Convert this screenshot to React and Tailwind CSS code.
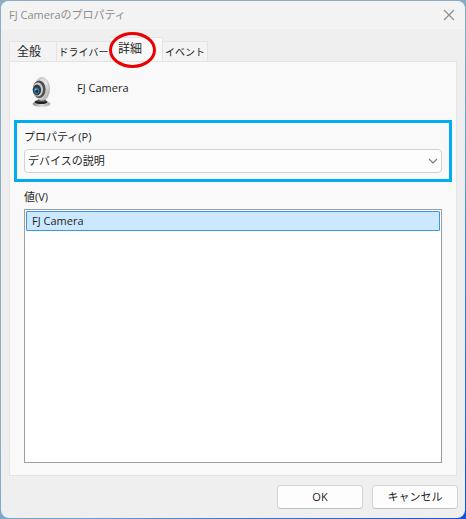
import React, { useState } from 'react';

const tabs = [
  { id: 'general', label: '全般', className: 'w-12 pl-[7px] text-xs' },
  { id: 'driver', label: 'ドライバー', className: 'w-[54px] justify-center text-[10px]' },
  { id: 'details', label: '詳細', className: 'w-[52px] pl-[7px] text-xs' },
  { id: 'events', label: 'イベント', className: 'w-[45px] justify-center text-[10px]' },
];

const buttonClass = "w-[86px] h-6 rounded-sm border border-[#d4d4d4] border-b-[#c2c2c2] bg-[#fdfdfd] text-[11px] leading-4 text-[#1f1f1f]";

function CameraIcon() {
  return (
    <svg width="20" height="31" viewBox="0 0 20 31" aria-hidden="true">
      <defs>
        <linearGradient id="shell" x1="0" y1="0" x2="1" y2="1">
          <stop offset="0" stopColor="#c6c6c6" />
          <stop offset="0.5" stopColor="#e6e6e6" />
          <stop offset="1" stopColor="#a0a0a0" />
        </linearGradient>
        <linearGradient id="base" x1="0" y1="0" x2="1" y2="0">
          <stop offset="0" stopColor="#8e8e8e" />
          <stop offset="0.5" stopColor="#d9d9d9" />
          <stop offset="1" stopColor="#aaaaaa" />
        </linearGradient>
      </defs>
      <ellipse cx="10.5" cy="26.8" rx="9" ry="3" fill="url(#base)" />
      <ellipse cx="10" cy="25" rx="6.5" ry="2.1" fill="#202020" />
      <path d="M8 21h6l1 4H6z" fill="#4a4a4a" />
      <ellipse cx="11" cy="12" rx="7.6" ry="11.5" fill="url(#shell)" stroke="#a8a8a8" strokeWidth="0.6" />
      <ellipse cx="8.2" cy="12.3" rx="6.4" ry="8.8" fill="#505050" />
      <ellipse cx="6.8" cy="12.6" rx="5.2" ry="7" fill="#d0d0d0" />
      <ellipse cx="6" cy="13" rx="4.2" ry="5.4" fill="#343a40" />
      <ellipse cx="5.6" cy="13.8" rx="2.6" ry="3.2" fill="#3577a8" />
      <circle cx="5.8" cy="14.4" r="1.3" fill="#102a44" />
      <circle cx="4.8" cy="12.5" r="0.7" fill="#a9d7f2" />
    </svg>
  );
}

export default function App() {
  const [activeTab, setActiveTab] = useState('details');

  return (
    <div className="min-h-screen flex p-px bg-[linear-gradient(135deg,#8eacc4_0%,#8eacc4_45%,#68a5d5_60%,#3c7fd0_75%,#1552d8_100%)] font-['Open_Sans','Noto_Sans_CJK_JP',sans-serif] text-[11px] leading-4 text-[#1f1f1f]">
      <div className="flex-1 flex flex-col rounded-lg overflow-hidden bg-[#efefef]">
        {/* Title bar */}
        <header className="h-7 shrink-0 flex items-center justify-between pl-2 pr-[6px] bg-[#f3f3f3]">
          <h1 className="text-[#8c8c8c]">FJ Cameraのプロパティ</h1>
          <button aria-label="閉じる" className="p-1 text-[#8f8f8f]">
            <svg width="12" height="12" viewBox="0 0 12 12" fill="none" stroke="currentColor" strokeWidth="1.2">
              <path d="M1 1l10 10M11 1L1 11" />
            </svg>
          </button>
        </header>

        <main className="flex-1 flex flex-col px-2 pt-2">
          {/* Tabs */}
          <div role="tablist" className="flex items-end h-6">
            {tabs.map(t => (
              <button
                key={t.id}
                role="tab"
                aria-selected={activeTab === t.id}
                onClick={() => setActiveTab(t.id)}
                className={`relative flex items-center whitespace-nowrap border-t border-r first:border-l border-[#e4e4e4] ${t.className} ${activeTab === t.id ? 'h-6 pb-px bg-[#f9f9f9]' : 'h-5 bg-[#f3f3f3]'}`}
              >
                {t.label}
                {t.id === 'details' && (
                  <span className="absolute -left-0.5 -top-1.5 w-[47px] h-9 rounded-[50%] border-[3px] border-[#ea0000] z-10 pointer-events-none" />
                )}
              </button>
            ))}
          </div>

          {/* Details page */}
          <section role="tabpanel" className="flex-1 flex flex-col border border-[#e4e4e4] bg-[#f9f9f9] px-1 pb-3">
            <div className="flex items-start h-[58px] pt-[15px] pl-[17px]">
              <CameraIcon />
              <span className="ml-[26px] pt-[3px]">FJ Camera</span>
            </div>

            <div className="border-[3px] border-[#00aeef] h-[62px] px-[7px] pt-[6px]">
              <label htmlFor="property" className="block">プロパティ(P)</label>
              <div className="relative mt-1">
                <select
                  id="property"
                  className="block w-full h-6 appearance-none rounded-sm border border-[#d2d2d2] bg-[#fdfdfd] pl-[3px] pr-6 text-[11px] leading-4"
                >
                  <option>デバイスの説明</option>
                </select>
                <svg className="absolute right-1 top-2 pointer-events-none" width="10" height="8" viewBox="0 0 10 8" fill="none" stroke="#7a7a7a" strokeWidth="1.2">
                  <path d="M1 2l4 4 4-4" />
                </svg>
              </div>
            </div>

            <div className="flex-1 flex flex-col px-[10px] pt-[7px]">
              <span id="value-label">値(V)</span>
              <ul role="listbox" aria-labelledby="value-label" className="flex-1 mt-1 p-px border border-[#9a9fa6] bg-white">
                <li role="option" aria-selected="true" className="h-5 flex items-center pl-[5px] rounded-[1px] border border-[#3c96e0] bg-[#cce8ff]">
                  FJ Camera
                </li>
              </ul>
            </div>
          </section>
        </main>

        <footer className="flex justify-end gap-[9px] pt-[9px] pb-[9px] pr-[7px]">
          <button className={buttonClass}>OK</button>
          <button className={buttonClass}>キャンセル</button>
        </footer>
      </div>
    </div>
  );
}
